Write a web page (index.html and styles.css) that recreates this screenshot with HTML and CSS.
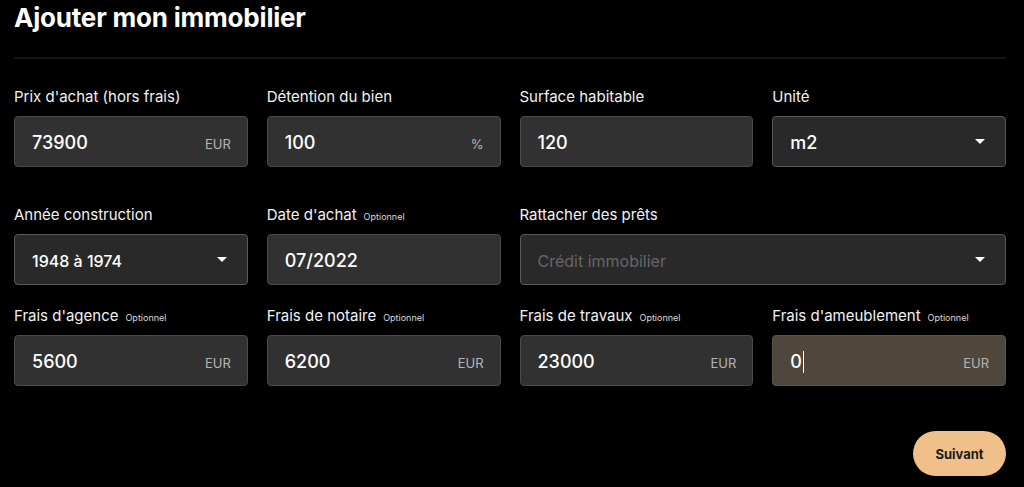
FILE: index.html
```html
<!DOCTYPE html>
<html lang="fr">
<head>
  <meta charset="UTF-8">
  <meta name="viewport" content="width=device-width, initial-scale=1.0">
  <title>Ajouter mon immobilier</title>
  <link rel="stylesheet" href="styles.css">
</head>
<body>
<div class="page">
  <h1>Ajouter mon immobilier</h1>
  <hr class="sep">

  <form class="grid row-first">
    <div class="field">
      <label>Prix d'achat (hors frais)</label>
      <div class="box"><span class="value">73900</span><span class="unit">EUR</span></div>
    </div>
    <div class="field">
      <label>Détention du bien</label>
      <div class="box"><span class="value">100</span><span class="unit">%</span></div>
    </div>
    <div class="field">
      <label>Surface habitable</label>
      <div class="box"><span class="value">120</span></div>
    </div>
    <div class="field">
      <label>Unité</label>
      <div class="box select"><span class="value">m2</span><span class="caret"></span></div>
    </div>
  </form>

  <form class="grid row-second">
    <div class="field">
      <label>Année construction</label>
      <div class="box select"><span class="value small">1948 à 1974</span><span class="caret"></span></div>
    </div>
    <div class="field">
      <label>Date d'achat <small>Optionnel</small></label>
      <div class="box"><span class="value">07/2022</span></div>
    </div>
    <div class="field wide">
      <label>Rattacher des prêts</label>
      <div class="box select"><span class="value placeholder">Crédit immobilier</span><span class="caret"></span></div>
    </div>
  </form>

  <form class="grid row-third">
    <div class="field">
      <label>Frais d'agence <small>Optionnel</small></label>
      <div class="box"><span class="value">5600</span><span class="unit">EUR</span></div>
    </div>
    <div class="field">
      <label>Frais de notaire <small>Optionnel</small></label>
      <div class="box"><span class="value">6200</span><span class="unit">EUR</span></div>
    </div>
    <div class="field">
      <label>Frais de travaux <small>Optionnel</small></label>
      <div class="box"><span class="value">23000</span><span class="unit">EUR</span></div>
    </div>
    <div class="field">
      <label>Frais d'ameublement <small>Optionnel</small></label>
      <div class="box focus"><span class="value">0<i class="cursor"></i></span><span class="unit">EUR</span></div>
    </div>
  </form>

  <div class="actions">
    <button type="button">Suivant</button>
  </div>
</div>
</body>
</html>
```

FILE: styles.css
```css
body {
  margin: 0;
  background-color: #000;
  color: #fff;
  font-family: Inter, "Noto Sans", sans-serif;
}

.page {
  padding: 2px 18px 0 14px;
}

h1 {
  margin: 0;
  font-size: 26px;
  line-height: 32px;
  font-weight: 700;
  letter-spacing: -0.2px;
}

.sep {
  margin: 23px 0 0;
  border: none;
  border-top: 2px solid #151515;
}

.grid {
  display: grid;
  grid-template-columns: repeat(4, 1fr);
  column-gap: 19px;
}

.row-first {
  margin-top: 28px;
}

.row-second {
  margin-top: 38px;
}

.row-third {
  margin-top: 21px;
}

.wide {
  grid-column: span 2;
}

.field label {
  display: flex;
  align-items: baseline;
  gap: 7px;
  height: 20px;
  font-size: 15px;
  line-height: 20px;
  color: #f2f2f2;
  margin-bottom: 9px;
}

.field label small {
  font-size: 9px;
  color: #ddd;
}

.box {
  display: flex;
  align-items: center;
  justify-content: space-between;
  height: 51px;
  box-sizing: border-box;
  padding: 2px 16px 0 17px;
  background-color: #313131;
  border: 1px solid #4a4a4a;
  border-radius: 4px;
}

.box.select {
  background-color: #292929;
  border-color: #5a5a5a;
}

.box.focus {
  background-color: #4f463c;
  border-color: #5d554c;
}

.value {
  font-size: 18px;
  font-weight: 500;
  color: #fff;
  display: flex;
  align-items: center;
}

.value.small {
  font-size: 16px;
}

.value.placeholder {
  font-size: 16px;
  font-weight: 400;
  color: #666;
}

.cursor {
  display: inline-block;
  width: 1px;
  height: 22px;
  margin-left: 1px;
  background-color: #fff;
}

.unit {
  font-size: 13px;
  color: #b5b5b5;
  margin-top: 2px;
}

.caret {
  width: 0;
  height: 0;
  margin-right: 4px;
  margin-top: -2px;
  border-left: 5px solid transparent;
  border-right: 5px solid transparent;
  border-top: 5px solid #fff;
}

.actions {
  display: flex;
  justify-content: flex-end;
  margin-top: 45px;
}

button {
  width: 93px;
  height: 45px;
  background-color: #f0c08a;
  color: #1a1a1a;
  font-family: Inter, "Noto Sans", sans-serif;
  font-size: 13px;
  font-weight: 700;
  border: none;
  border-radius: 23px;
  cursor: pointer;
}
```
